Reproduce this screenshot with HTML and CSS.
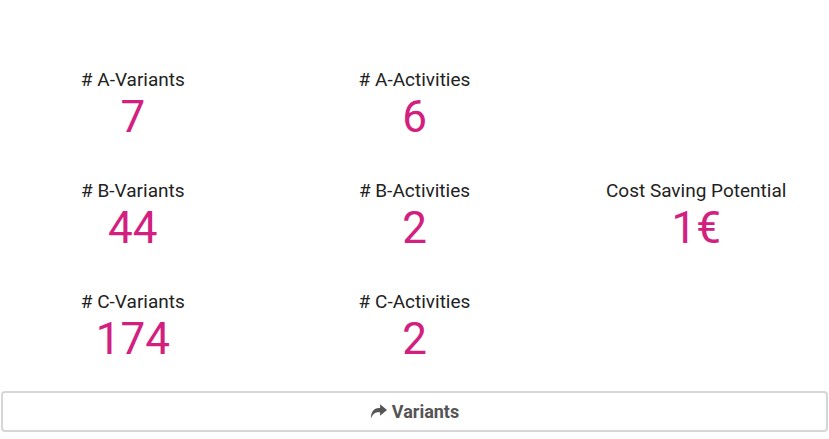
FILE: index.html
```html
<!DOCTYPE html>
<html lang="en">

<head>
    <meta charset="UTF-8">
    <meta name="viewport" content="width=device-width, initial-scale=1.0">
    <title>Variant Analysis</title>
    <link rel="stylesheet" href="styles.css">
</head>

<body>
    <div class="kpi-grid">
        <div class="kpi">
            <div class="kpi-label"># A-Variants</div>
            <div class="kpi-value">7</div>
        </div>
        <div class="kpi">
            <div class="kpi-label"># A-Activities</div>
            <div class="kpi-value">6</div>
        </div>
        <div class="kpi"></div>

        <div class="kpi">
            <div class="kpi-label"># B-Variants</div>
            <div class="kpi-value">44</div>
        </div>
        <div class="kpi">
            <div class="kpi-label"># B-Activities</div>
            <div class="kpi-value">2</div>
        </div>
        <div class="kpi">
            <div class="kpi-label">Cost Saving Potential</div>
            <div class="kpi-value">1€</div>
        </div>

        <div class="kpi">
            <div class="kpi-label"># C-Variants</div>
            <div class="kpi-value">174</div>
        </div>
        <div class="kpi">
            <div class="kpi-label"># C-Activities</div>
            <div class="kpi-value">2</div>
        </div>
        <div class="kpi"></div>
    </div>

    <button class="nav-button">
        <svg class="icon" viewBox="0 0 16 14" width="17" height="15" aria-hidden="true">
            <path d="M9.5 0.2 L16 5.6 L9.5 11 V7.8 H8.2 C4.6 7.8 2.6 9.6 0.8 13.6 C0.9 7.6 3.4 3.6 8.4 3.6 H9.5 Z" />
        </svg>
        Variants
    </button>
</body>

</html>
```

FILE: styles.css
```css
body {
    margin: 0;
    font-family: Roboto, "Liberation Sans", sans-serif;
    background: #fff;
}

.kpi-grid {
    display: grid;
    grid-template-columns: 1fr 1fr 1fr;
    row-gap: 36px;
    margin: 0 -8px;
    padding-top: 68px;
}

.kpi {
    text-align: center;
}

.kpi-label {
    font-size: 19px;
    color: #222;
}

.kpi-value {
    font-size: 44px;
    color: #d3207f;
}

.nav-button {
    display: flex;
    align-items: center;
    justify-content: center;
    gap: 5px;
    box-sizing: border-box;
    width: 827px;
    height: 41px;
    margin: 26px 1px 0;
    padding: 0;
    background: #fff;
    border: 2px solid #d6d6d6;
    border-radius: 4px;
    font-family: Roboto, "Liberation Sans", sans-serif;
    font-size: 18px;
    font-weight: bold;
    color: #555;
}

.nav-button .icon {
    fill: #555;
}
```
